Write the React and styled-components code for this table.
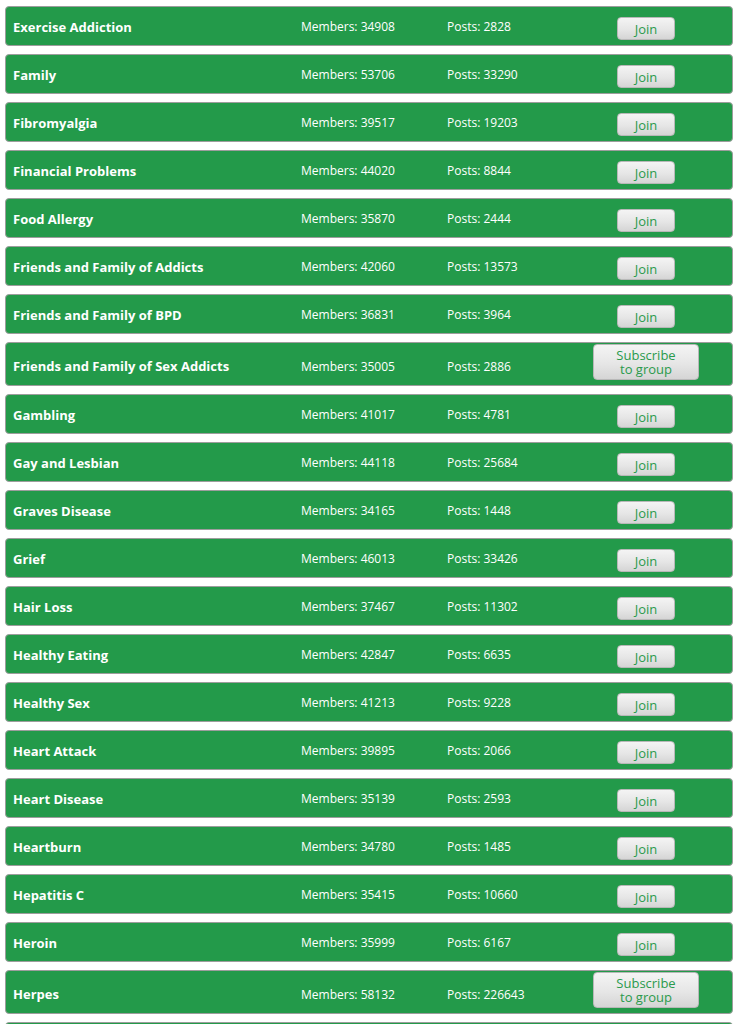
import React from "react";
import styled, { createGlobalStyle } from "styled-components";

const Global = createGlobalStyle`
  html, body { margin: 0; padding: 0; background: #ffffff; }
  body { font-family: "Open Sans", "Noto Sans", sans-serif; }
`;

const List = styled.div`
  display: flex;
  flex-direction: column;
  gap: 8px;
  padding: 6px 8px 0 5px;
`;

const Card = styled.div`
  display: grid;
  grid-template-columns: 288px 146px 145px 108px;
  align-items: center;
  height: ${(p) => (p.$tall ? 44 : 40)}px;
  box-sizing: border-box;
  padding-left: 7px;
  padding-top: ${(p) => (p.$tall ? 3 : 0)}px;
  background: #239a4a;
  border: 1px solid #9d9d9d;
  border-radius: 4px;
  color: #ffffff;
`;

const Name = styled.div`
  font-weight: 700;
  font-size: 13px;
  line-height: 16px;
  padding-top: 1px;
`;

const Stat = styled.div`
  font-size: 12px;
  line-height: 16px;
  padding-top: 2px;
`;

const ButtonCell = styled.div`
  display: flex;
  justify-content: center;
`;

const Button = styled.button`
  box-sizing: border-box;
  width: ${(p) => (p.$wide ? 106 : 58)}px;
  height: ${(p) => (p.$wide ? 36 : 23)}px;
  margin-top: ${(p) => (p.$wide ? -7 : 5)}px;
  padding: 0;
  font-family: "Open Sans", "Noto Sans", sans-serif;
  font-size: 13px;
  line-height: 14px;
  color: #2a9a4c;
  background: linear-gradient(to bottom, #f4f4f4 0%, #e6e6e6 55%, #d5d5d5 100%);
  border: 1px solid #b8b8b8;
  border-radius: 4px;
  cursor: pointer;
`;

const groups = [
  ["Exercise Addiction", 34908, 2828],
  ["Family", 53706, 33290],
  ["Fibromyalgia", 39517, 19203],
  ["Financial Problems", 44020, 8844],
  ["Food Allergy", 35870, 2444],
  ["Friends and Family of Addicts", 42060, 13573],
  ["Friends and Family of BPD", 36831, 3964],
  ["Friends and Family of Sex Addicts", 35005, 2886, true],
  ["Gambling", 41017, 4781],
  ["Gay and Lesbian", 44118, 25684],
  ["Graves Disease", 34165, 1448],
  ["Grief", 46013, 33426],
  ["Hair Loss", 37467, 11302],
  ["Healthy Eating", 42847, 6635],
  ["Healthy Sex", 41213, 9228],
  ["Heart Attack", 39895, 2066],
  ["Heart Disease", 35139, 2593],
  ["Heartburn", 34780, 1485],
  ["Hepatitis C", 35415, 10660],
  ["Heroin", 35999, 6167],
  ["Herpes", 58132, 226643, true],
  ["Herpes Zoster", 36120, 1980],
];

export default function App() {
  return (
    <>
      <Global />
      <List>
        {groups.map(([name, members, posts, sub]) => (
          <Card key={name} $tall={sub}>
            <Name>{name}</Name>
            <Stat>Members: {members}</Stat>
            <Stat>Posts: {posts}</Stat>
            <ButtonCell>
              <Button $wide={sub}>
                {sub ? (
                  <>
                    Subscribe
                    <br />
                    to group
                  </>
                ) : (
                  "Join"
                )}
              </Button>
            </ButtonCell>
          </Card>
        ))}
      </List>
    </>
  );
}
